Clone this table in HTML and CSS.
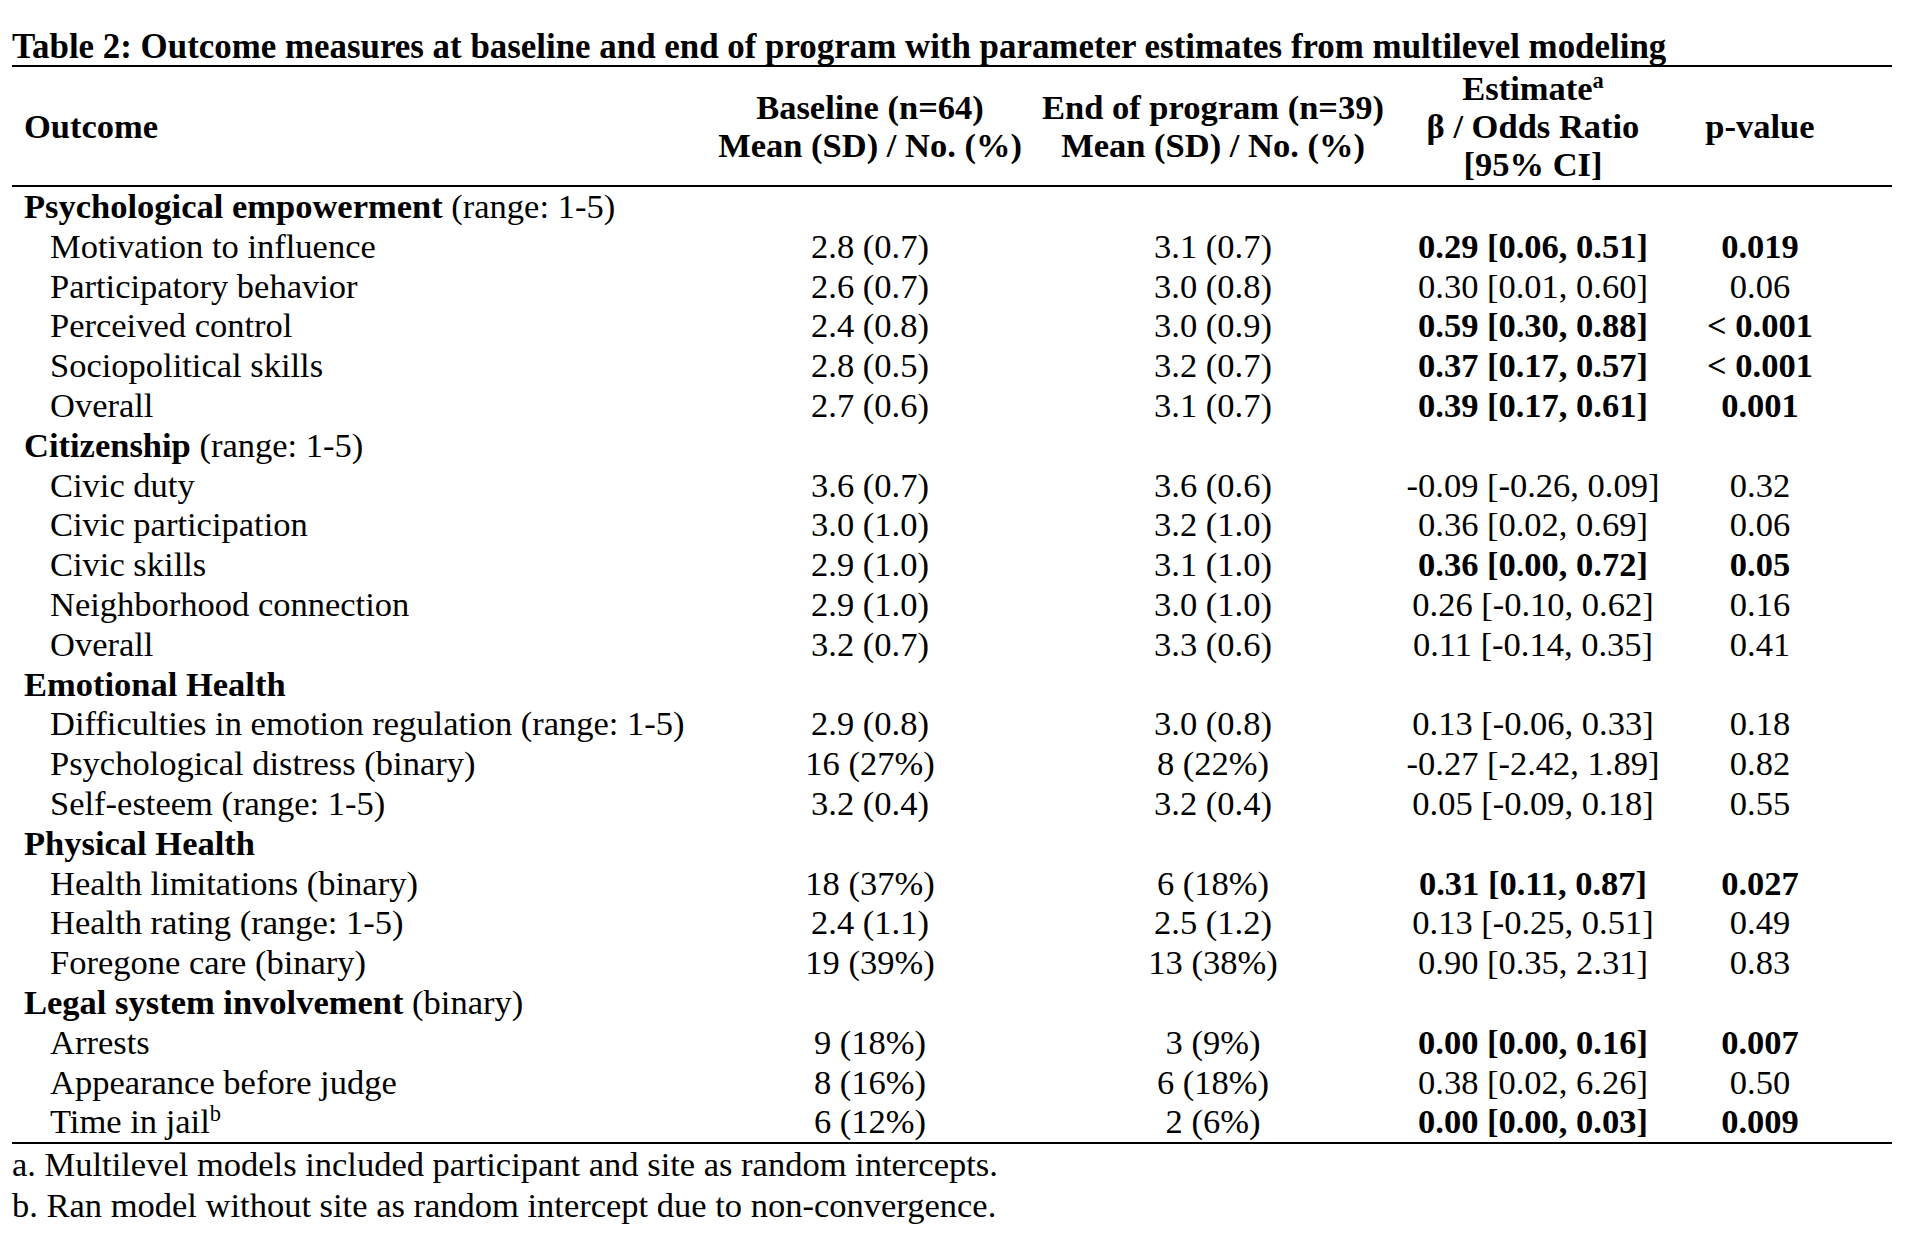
FILE: index.html
```html
<!DOCTYPE html>
<html lang="en">
<head>
<meta charset="utf-8">
<title>Table 2</title>
<link rel="stylesheet" href="styles.css">
</head>
<body>
<div class="page">
  <div class="title">Table 2: Outcome measures at baseline and end of program with parameter estimates from multilevel modeling</div>
  <table class="tbl">
    <colgroup>
      <col class="c-out"><col class="c-base"><col class="c-end"><col class="c-est"><col class="c-p">
    </colgroup>
    <thead>
      <tr>
        <th class="h-left">Outcome</th>
        <th>Baseline (n=64)<br>Mean (SD) / No. (%)</th>
        <th>End of program (n=39)<br>Mean (SD) / No. (%)</th>
        <th>Estimate<sup>a</sup><br>β / Odds Ratio<br>[95% CI]</th>
        <th class="pcol">p-value</th>
      </tr>
    </thead>
    <tbody>
      <tr><td class="sec"><b>Psychological empowerment</b> (range: 1-5)</td><td></td><td></td><td></td><td class="pcol"></td></tr>
      <tr><td class="sub">Motivation to influence</td><td>2.8 (0.7)</td><td>3.1 (0.7)</td><td class="b">0.29 [0.06, 0.51]</td><td class="pcol b">0.019</td></tr>
      <tr><td class="sub">Participatory behavior</td><td>2.6 (0.7)</td><td>3.0 (0.8)</td><td>0.30 [0.01, 0.60]</td><td class="pcol">0.06</td></tr>
      <tr><td class="sub">Perceived control</td><td>2.4 (0.8)</td><td>3.0 (0.9)</td><td class="b">0.59 [0.30, 0.88]</td><td class="pcol b">&lt; 0.001</td></tr>
      <tr><td class="sub">Sociopolitical skills</td><td>2.8 (0.5)</td><td>3.2 (0.7)</td><td class="b">0.37 [0.17, 0.57]</td><td class="pcol b">&lt; 0.001</td></tr>
      <tr><td class="sub">Overall</td><td>2.7 (0.6)</td><td>3.1 (0.7)</td><td class="b">0.39 [0.17, 0.61]</td><td class="pcol b">0.001</td></tr>
      <tr><td class="sec"><b>Citizenship</b> (range: 1-5)</td><td></td><td></td><td></td><td class="pcol"></td></tr>
      <tr><td class="sub">Civic duty</td><td>3.6 (0.7)</td><td>3.6 (0.6)</td><td>-0.09 [-0.26, 0.09]</td><td class="pcol">0.32</td></tr>
      <tr><td class="sub">Civic participation</td><td>3.0 (1.0)</td><td>3.2 (1.0)</td><td>0.36 [0.02, 0.69]</td><td class="pcol">0.06</td></tr>
      <tr><td class="sub">Civic skills</td><td>2.9 (1.0)</td><td>3.1 (1.0)</td><td class="b">0.36 [0.00, 0.72]</td><td class="pcol b">0.05</td></tr>
      <tr><td class="sub">Neighborhood connection</td><td>2.9 (1.0)</td><td>3.0 (1.0)</td><td>0.26 [-0.10, 0.62]</td><td class="pcol">0.16</td></tr>
      <tr><td class="sub">Overall</td><td>3.2 (0.7)</td><td>3.3 (0.6)</td><td>0.11 [-0.14, 0.35]</td><td class="pcol">0.41</td></tr>
      <tr><td class="sec"><b>Emotional Health</b></td><td></td><td></td><td></td><td class="pcol"></td></tr>
      <tr><td class="sub">Difficulties in emotion regulation (range: 1-5)</td><td>2.9 (0.8)</td><td>3.0 (0.8)</td><td>0.13 [-0.06, 0.33]</td><td class="pcol">0.18</td></tr>
      <tr><td class="sub">Psychological distress (binary)</td><td>16 (27%)</td><td>8 (22%)</td><td>-0.27 [-2.42, 1.89]</td><td class="pcol">0.82</td></tr>
      <tr><td class="sub">Self-esteem (range: 1-5)</td><td>3.2 (0.4)</td><td>3.2 (0.4)</td><td>0.05 [-0.09, 0.18]</td><td class="pcol">0.55</td></tr>
      <tr><td class="sec"><b>Physical Health</b></td><td></td><td></td><td></td><td class="pcol"></td></tr>
      <tr><td class="sub">Health limitations (binary)</td><td>18 (37%)</td><td>6 (18%)</td><td class="b">0.31 [0.11, 0.87]</td><td class="pcol b">0.027</td></tr>
      <tr><td class="sub">Health rating (range: 1-5)</td><td>2.4 (1.1)</td><td>2.5 (1.2)</td><td>0.13 [-0.25, 0.51]</td><td class="pcol">0.49</td></tr>
      <tr><td class="sub">Foregone care (binary)</td><td>19 (39%)</td><td>13 (38%)</td><td>0.90 [0.35, 2.31]</td><td class="pcol">0.83</td></tr>
      <tr><td class="sec"><b>Legal system involvement</b> (binary)</td><td></td><td></td><td></td><td class="pcol"></td></tr>
      <tr><td class="sub">Arrests</td><td>9 (18%)</td><td>3 (9%)</td><td class="b">0.00 [0.00, 0.16]</td><td class="pcol b">0.007</td></tr>
      <tr><td class="sub">Appearance before judge</td><td>8 (16%)</td><td>6 (18%)</td><td>0.38 [0.02, 6.26]</td><td class="pcol">0.50</td></tr>
      <tr class="last"><td class="sub">Time in jail<sup>b</sup></td><td>6 (12%)</td><td>2 (6%)</td><td class="b">0.00 [0.00, 0.03]</td><td class="pcol b">0.009</td></tr>
    </tbody>
  </table>
  <div class="notes">
    <p>a. Multilevel models included participant and site as random intercepts.</p>
    <p>b. Ran model without site as random intercept due to non-convergence.</p>
  </div>
</div>
</body>
</html>
```

FILE: styles.css
```css
html, body {
  margin: 0;
  padding: 0;
  background: #ffffff;
}

body {
  font-family: "Liberation Serif", "Times New Roman", serif;
  font-size: 34.5px;
  color: #000000;
}

.page {
  width: 1880px;
  padding: 28px 18px 0 12px;
}

.title {
  font-weight: bold;
  font-size: 34.9px;
  line-height: 37px;
  white-space: nowrap;
}

.tbl {
  width: 1880px;
  table-layout: fixed;
  border-collapse: collapse;
  border-top: 2.5px solid #000;
  border-bottom: 2.5px solid #000;
}

.c-out { width: 700px; }
.c-base { width: 316px; }
.c-end { width: 370px; }
.c-est { width: 270px; }
.c-p { width: 224px; }

.tbl th {
  font-weight: bold;
  line-height: 38px;
  padding: 2px 0;
  text-align: center;
  vertical-align: middle;
  white-space: nowrap;
  border-bottom: 2.5px solid #000;
}

.tbl th.h-left {
  text-align: left;
  padding-left: 12px;
}

.tbl td {
  padding: 0;
  line-height: 39.8px;
  text-align: center;
  white-space: nowrap;
}

.tbl .pcol {
  padding-right: 40px;
}

.tbl td.sec {
  text-align: left;
  padding-left: 12px;
}

.tbl td.sub {
  text-align: left;
  padding-left: 38px;
}

.tbl td.b {
  font-weight: bold;
}

sup {
  font-size: 0.65em;
  line-height: 0;
  vertical-align: 0.55em;
}

.notes p {
  margin: 0;
  line-height: 41px;
  white-space: nowrap;
}
```
